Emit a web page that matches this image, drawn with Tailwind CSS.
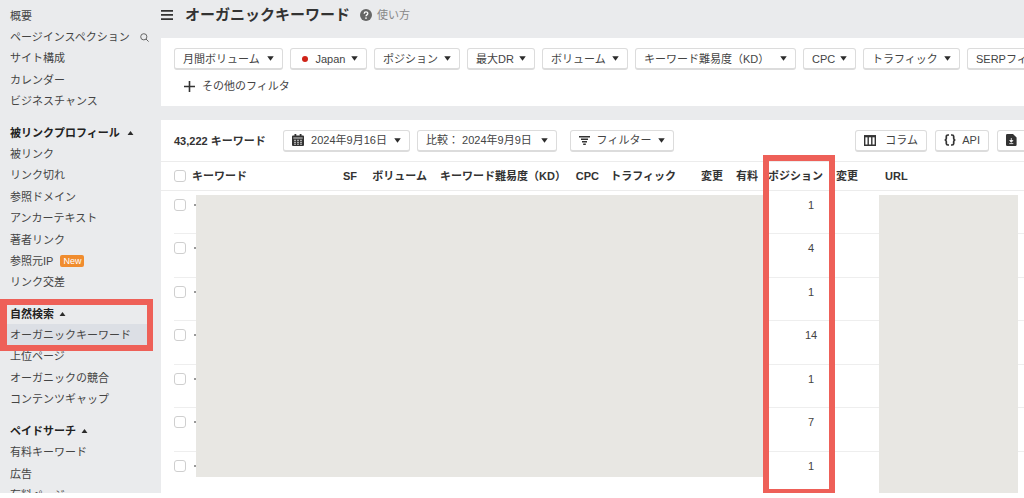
<!DOCTYPE html>
<html lang="ja">
<head>
<meta charset="utf-8">
<title>オーガニックキーワード</title>
<script src="https://cdn.jsdelivr.net/npm/@tailwindcss/browser@4"></script>
</head>
<body class="h-screen overflow-hidden bg-white pb-[5px] font-['Liberation_Sans','Noto_Sans_CJK_JP',sans-serif] text-[11px] leading-[16px] text-[#444]">
<svg class="hidden" aria-hidden="true">
  <symbol id="down" viewBox="0 0 8 5"><path d="M.3 0h7.4L4 5z" fill="#2b2b2b"/></symbol>
  <symbol id="up" viewBox="0 0 8 5"><path d="M.3 5h7.4L4 0z" fill="#2b2b2b"/></symbol>
</svg>
<div class="flex h-full overflow-hidden bg-[#eaebed]">
  <nav class="relative flex w-[161px] shrink-0 flex-col gap-[10px] whitespace-nowrap pt-[5px]" aria-label="メニュー">
    <ul class="grid min-h-[107px] shrink-0 auto-rows-fr items-center">
      <li class="pl-[10px]"><a href="#">概要</a></li>
      <li class="flex items-center gap-[10px] pl-[10px]"><a href="#">ページインスペクション</a>
        <svg class="size-[9px]" viewBox="0 0 9 9" fill="none" stroke="#666" stroke-width="1"><circle cx="3.8" cy="3.8" r="3.1"/><path d="M6 6l2.6 2.6"/></svg></li>
      <li class="pl-[10px]"><a href="#">サイト構成</a></li>
      <li class="pl-[10px]"><a href="#">カレンダー</a></li>
      <li class="pl-[10px]"><a href="#">ビジネスチャンス</a></li>
    </ul>
    <ul class="grid min-h-[171px] shrink-0 auto-rows-fr items-center">
      <li class="pl-[10px]"><button class="flex items-center gap-[7px] font-bold text-[#222]">被リンクプロフィール<svg class="h-[4px] w-[7px]"><use href="#up"/></svg></button></li>
      <li class="pl-[10px]"><a href="#">被リンク</a></li>
      <li class="pl-[10px]"><a href="#">リンク切れ</a></li>
      <li class="pl-[10px]"><a href="#">参照ドメイン</a></li>
      <li class="pl-[10px]"><a href="#">アンカーテキスト</a></li>
      <li class="pl-[10px]"><a href="#">著者リンク</a></li>
      <li class="flex items-center gap-[7px] pl-[10px]"><a href="#">参照元IP</a><span class="rounded-[2px] bg-[#f08c2e] px-[3px] text-[9px] leading-[12px] text-white">New</span></li>
      <li class="pl-[10px]"><a href="#">リンク交差</a></li>
    </ul>
    <ul class="grid min-h-[107px] shrink-0 auto-rows-fr items-center">
      <li class="pl-[10px]"><button class="flex items-center gap-[5px] font-bold text-[#222]">自然検索<svg class="h-[4px] w-[7px]"><use href="#up"/></svg></button></li>
      <li class="mr-[11px] flex items-center self-stretch bg-[#dcdfe5] pl-[10px]"><a href="#" aria-current="page">オーガニックキーワード</a></li>
      <li class="pl-[10px]"><a href="#">上位ページ</a></li>
      <li class="pl-[10px]"><a href="#">オーガニックの競合</a></li>
      <li class="pl-[10px]"><a href="#">コンテンツギャップ</a></li>
    </ul>
    <ul class="grid min-h-[86px] shrink-0 auto-rows-fr items-center">
      <li class="pl-[10px]"><button class="flex items-center gap-[5px] font-bold text-[#222]">ペイドサーチ<svg class="h-[4px] w-[7px]"><use href="#up"/></svg></button></li>
      <li class="pl-[10px]"><a href="#">有料キーワード</a></li>
      <li class="pl-[10px]"><a href="#">広告</a></li>
      <li class="pl-[10px]"><a href="#">有料ページ</a></li>
    </ul>
    <div class="absolute top-[299px] right-[8px] left-0 h-[52px] border-[6px] border-l-[7px] border-[#ee6058]"></div>
  </nav>

  <main class="flex min-w-0 flex-1 flex-col overflow-hidden whitespace-nowrap">
    <header class="flex h-[38px] shrink-0 items-center pb-[8px]">
      <button aria-label="メニュー"><svg class="h-[10px] w-[12px]" viewBox="0 0 12 10" fill="#333"><path d="M0 0h12v1.7H0zM0 4.1h12v1.7H0zM0 8.2h12v1.7H0z"/></svg></button>
      <h1 class="ml-[12px] text-[15px] leading-[20px] font-bold text-[#333]">オーガニックキーワード</h1>
      <a href="#" class="ml-[10px] flex items-center gap-[5px] text-[#888]"><svg class="size-[12px]" viewBox="0 0 12 12"><circle cx="6" cy="6" r="6" fill="#666"/><path d="M4.2 4.7c0-2.3 3.6-2.3 3.6-.1C7.800 5.900 6 5.900 6 7.200" fill="none" stroke="#fff" stroke-width="1.3"/><circle cx="6" cy="9.100" r=".85" fill="#fff"/></svg>使い方</a>
    </header>

    <section class="h-[68px] shrink-0 bg-white pt-[10px] pl-[13px]" aria-label="フィルタ">
      <div class="flex gap-[7px] [&>button]:flex [&>button]:h-[22px] [&>button]:shrink-0 [&>button]:items-center [&>button]:justify-between [&>button]:rounded-[3px] [&>button]:border [&>button]:border-b-2 [&>button]:border-[#dcdcdc] [&>button]:px-[8px]">
        <button class="min-w-[109px]">月間ボリューム<svg class="h-[5px] w-[7px]"><use href="#down"/></svg></button>
        <button class="min-w-[77px]"><span class="ml-[3px] size-[6px] rounded-full bg-[#cf2318]"></span><span class="ml-[2px]">Japan</span><svg class="h-[5px] w-[7px]"><use href="#down"/></svg></button>
        <button class="min-w-[86px]">ポジション<svg class="h-[5px] w-[7px]"><use href="#down"/></svg></button>
        <button class="min-w-[68px]">最大DR<svg class="h-[5px] w-[7px]"><use href="#down"/></svg></button>
        <button class="min-w-[86px]">ボリューム<svg class="h-[5px] w-[7px]"><use href="#down"/></svg></button>
        <button class="min-w-[161px]">キーワード難易度（KD）<svg class="h-[5px] w-[7px]"><use href="#down"/></svg></button>
        <button class="min-w-[53px]">CPC<svg class="h-[5px] w-[7px]"><use href="#down"/></svg></button>
        <button class="min-w-[97px]">トラフィック<svg class="h-[5px] w-[7px]"><use href="#down"/></svg></button>
        <button class="min-w-[98px]">SERPフィーチャー<svg class="h-[5px] w-[7px]"><use href="#down"/></svg></button>
      </div>
      <button class="mt-[8px] ml-[10px] flex items-center gap-[7px]"><svg class="size-[11px]" viewBox="0 0 11 11" stroke="#333" stroke-width="1.600"><path d="M5.500 0v11M0 5.500h11"/></svg>その他のフィルタ</button>
    </section>

    <section class="relative mt-[14px] flex-1 bg-white" aria-label="キーワード一覧">
      <div class="flex h-[42px] items-center border-b border-[#ececec] pl-[13px] [&_button]:flex [&_button]:h-[22px] [&_button]:shrink-0 [&_button]:items-center [&_button]:rounded-[3px] [&_button]:border [&_button]:border-b-2 [&_button]:border-[#dcdcdc] [&_button]:px-[8px]">
        <strong class="w-[109px] text-[#333]">43,222 キーワード</strong>
        <button class="min-w-[127px] justify-between"><svg class="h-[12px] w-[12px]" viewBox="0 0 12 12"><path d="M1 1.400h1.500V0h1.800v1.400h3.400V0h1.800v1.400H11q1 0 1 1V11q0 1-1 1H1q-1 0-1-1V2.400q0-1 1-1z" fill="#333"/><path d="M1.300 4h9.400" stroke="#fff" stroke-width=".8"/><path d="M2 6.300h2M5 6.300h2M8 6.300h2M2 8.300h2M5 8.300h2M8 8.300h2M2 10.200h2M5 10.200h2M8 10.200h2" stroke="#ddd" stroke-width=".9"/></svg>2024年9月16日<svg class="h-[5px] w-[7px]"><use href="#down"/></svg></button>
        <button class="ml-[7px] min-w-[140px] justify-between">比較： 2024年9月9日<svg class="h-[5px] w-[7px]"><use href="#down"/></svg></button>
        <button class="ml-[13px] min-w-[104px] justify-between"><svg class="h-[9px] w-[11px]" viewBox="0 0 11 9" stroke="#333" stroke-width="1.400"><path d="M0 .8h11M2 3.300h7M3 5.800h5M4.200 8.300h2.600"/></svg>フィルター<svg class="h-[5px] w-[7px]"><use href="#down"/></svg></button>
        <div class="-mr-[13px] ml-auto flex gap-[8px]">
          <button class="min-w-[72px] justify-between"><svg class="h-[11px] w-[12px]" viewBox="0 0 12 11" fill="none" stroke="#333" stroke-width="1.400"><path d="M.7 1.200h10.600v9H.7zM4.200 1v9M7.800 1v9"/><path d="M0 1.200h12" stroke-width="2.200"/></svg>コラム</button>
          <button class="min-w-[54px] justify-between"><svg class="h-[12px] w-[12px]" viewBox="0 0 12 12" fill="none" stroke="#333" stroke-width="1.700"><path d="M5 1H4Q2.300 1 2.300 2.500V4.500Q2.300 6 .6 6 2.300 6 2.300 7.500V9.500Q2.300 11 4 11H5M7 1H8Q9.700 1 9.700 2.500V4.500Q9.700 6 11.400 6 9.700 6 9.700 7.500V9.500Q9.700 11 8 11H7"/></svg>API</button>
          <button class="min-w-[40px]" aria-label="エクスポート"><svg class="h-[12px] w-[11px]" viewBox="0 0 11 12"><path d="M1.200 0H7l3.600 3.400v7.400q0 1.200-1.200 1.200H1.200Q0 12 0 10.800V1.200Q0 0 1.200 0z" fill="#333"/><path d="M5.300 4v3M3.700 6.500h3.200l-1.600 1.800zM3.300 9.600h4" fill="#fff" stroke="#fff" stroke-width=".8"/></svg></button>
        </div>
      </div>
      <table class="w-full table-fixed border-separate border-spacing-0 [&_input]:block [&_input]:size-[12px] [&_input]:appearance-none [&_input]:rounded-[3px] [&_input]:border [&_input]:border-[#cfcfcf] [&_td]:border-b [&_td]:border-[#eeeeee] [&_td]:p-0 [&_td]:pt-[6px] [&_td]:align-top [&_td:first-child]:relative [&_td:first-child]:border-b-0 [&_td:first-child]:pt-[8px] [&_td:first-child]:pl-[13px] [&_td:first-child]:after:absolute [&_td:first-child]:after:right-0 [&_td:first-child]:after:bottom-0 [&_td:first-child]:after:left-[13px] [&_td:first-child]:after:h-px [&_td:first-child]:after:bg-[#eeeeee] [&_th]:h-[29px] [&_th]:border-b [&_th]:border-[#ececec] [&_th]:p-0 [&_th]:text-[#333]">
        <colgroup><col class="w-[31px]"><col class="w-[108px]"><col class="w-[57px]"><col class="w-[70px]"><col class="w-[139px]"><col class="w-[33px]"><col class="w-[77px]"><col class="w-[47px]"><col class="w-[35px]"><col class="w-[65px]"><col class="w-[35px]"><col></colgroup>
        <thead>
          <tr class="text-right"><th><input type="checkbox" aria-label="すべて選択" class="ml-[13px]"></th><th class="text-left">キーワード</th><th>SF</th><th>ボリューム</th><th>キーワード難易度（KD）</th><th>CPC</th><th>トラフィック</th><th>変更</th><th>有料</th><th>ポジション</th><th>変更</th><th class="text-left"><span class="ml-[27px]">URL</span></th></tr>
        </thead>
        <tbody>
          <tr class="h-[43px]"><td><input type="checkbox" aria-label="行1"></td><td><i class="mt-[7px] ml-[2px] block size-[2px] bg-[#999]"></i></td><td colspan="7"></td><td><span class="ml-[41px] block text-center">1</span></td><td></td><td></td></tr>
          <tr class="h-[44px]"><td><input type="checkbox" aria-label="行2"></td><td><i class="mt-[7px] ml-[2px] block size-[2px] bg-[#999]"></i></td><td colspan="7"></td><td><span class="ml-[41px] block text-center">4</span></td><td></td><td></td></tr>
          <tr class="h-[43px]"><td><input type="checkbox" aria-label="行3"></td><td><i class="mt-[7px] ml-[2px] block size-[2px] bg-[#999]"></i></td><td colspan="7"></td><td><span class="ml-[41px] block text-center">1</span></td><td></td><td></td></tr>
          <tr class="h-[44px]"><td><input type="checkbox" aria-label="行4"></td><td><i class="mt-[7px] ml-[2px] block size-[2px] bg-[#999]"></i></td><td colspan="7"></td><td><span class="ml-[41px] block text-center">14</span></td><td></td><td></td></tr>
          <tr class="h-[43px]"><td><input type="checkbox" aria-label="行5"></td><td><i class="mt-[7px] ml-[2px] block size-[2px] bg-[#999]"></i></td><td colspan="7"></td><td><span class="ml-[41px] block text-center">1</span></td><td></td><td></td></tr>
          <tr class="h-[44px]"><td><input type="checkbox" aria-label="行6"></td><td><i class="mt-[7px] ml-[2px] block size-[2px] bg-[#999]"></i></td><td colspan="7"></td><td><span class="ml-[41px] block text-center">7</span></td><td></td><td></td></tr>
          <tr class="h-[43px] [&>td]:border-b-0 [&>td:first-child]:after:hidden"><td><input type="checkbox" aria-label="行7"></td><td><i class="mt-[7px] ml-[2px] block size-[2px] bg-[#999]"></i></td><td colspan="7"></td><td><span class="ml-[41px] block text-center">1</span></td><td></td><td></td></tr>
        </tbody>
      </table>
      <!-- Masks over private columns, and the frame marking the position column -->
      <div class="absolute top-[75px] left-[35px] h-[282px] w-[568px] bg-[#e8e7e3]"></div>
      <div class="absolute top-[75px] right-[6px] bottom-0 left-[718px] bg-[#e8e7e3]"></div>
      <div class="absolute top-[35px] bottom-0 left-[602px] w-[72px] border-[6px] border-[#ee6058]"></div>
    </section>
  </main>
</div>
</body>
</html>
